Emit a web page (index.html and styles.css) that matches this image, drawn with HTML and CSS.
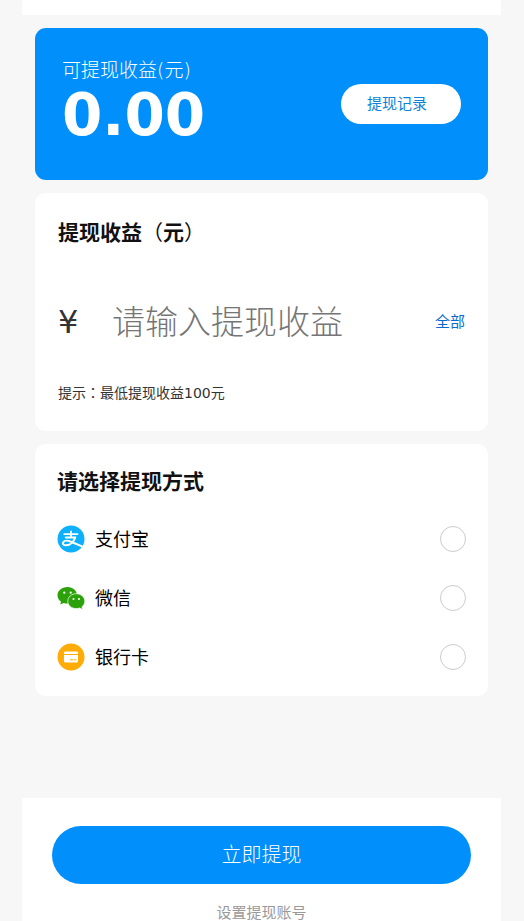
FILE: index.html
```html
<!DOCTYPE html>
<html lang="zh-CN">
<head>
<meta charset="utf-8">
<meta name="viewport" content="width=device-width, initial-scale=1">
<title>提现</title>
<link rel="stylesheet" href="styles.css">
</head>
<body>
<div class="app">
  <header class="topbar"></header>
  <main class="content">
    <section class="card balance">
      <div>
        <p class="balance-label">可提现收益(元)</p>
        <p class="balance-value">0.00</p>
      </div>
      <button class="history" type="button">提现记录</button>
    </section>

    <section class="card amount">
      <h2 class="title"><label for="amount">提现收益<span class="paren">（</span>元<span class="paren">）</span></label></h2>
      <div class="amount-row">
        <span class="currency">¥</span>
        <input class="amount-input" id="amount" type="text" inputmode="decimal" placeholder="请输入提现收益">
        <button class="all" type="button">全部</button>
      </div>
      <p class="hint">提示<span class="colon" lang="zh-TW">：</span>最低提现收益100元</p>
    </section>

    <section class="card methods">
      <h2 class="title">请选择提现方式</h2>
      <label class="method">
        <svg class="icon" viewBox="0 0 28 28" aria-hidden="true">
          <circle cx="14" cy="14" r="13.5" fill="#0eb0fb"/>
          <g fill="none" stroke="#fff" stroke-width="1.8" stroke-linecap="round">
            <path d="M7.3 9.2H20.5M14 6.3V12.3M8.7 12.5H18.3"/>
            <path d="M18.2 12.6C16.7 16.8 13.2 20.3 9.2 20.3C6.3 20.3 5.3 18.6 6.3 17.1C7.6 15.2 11 15.5 14 16.7L25 21.3" stroke-width="2"/>
          </g>
        </svg>
        <span class="method-name">支付宝</span>
        <input class="radio" type="radio" name="method">
      </label>
      <label class="method">
        <svg class="icon" viewBox="0 0 28 28" aria-hidden="true">
          <path fill="#2ba20a" d="M10.5 3C4.700 3 .5 6.700 .5 11.300C.5 14 1.900 16.200 4.100 17.700L3.200 20.600L6.700 18.900C8 19.300 9.300 19.500 10.700 19.500C16.200 19.300 20 15.700 20 11.300C20 6.700 16 3 10.500 3Z"/>
          <path fill="#2ba20a" stroke="#fff" stroke-width=".7" d="M19.300 9.700C14.500 9.700 10.800 13 10.800 17.200C10.800 21.500 14.500 24.600 19.300 24.600C20.500 24.600 21.600 24.400 22.600 24L25.600 25.600L24.900 22.900C26.700 21.500 27.800 19.500 27.800 17.200C27.800 13 24.100 9.700 19.300 9.700Z"/>
          <g fill="#fff"><circle cx="7.300" cy="8.700" r="1.100"/><circle cx="13.700" cy="8.700" r="1.100"/><circle cx="16.500" cy="15" r="1"/><circle cx="22" cy="15" r="1"/></g>
        </svg>
        <span class="method-name">微信</span>
        <input class="radio" type="radio" name="method">
      </label>
      <label class="method">
        <svg class="icon" viewBox="0 0 28 28" aria-hidden="true">
          <circle cx="14" cy="14" r="13.500" fill="#ffab08"/>
          <path fill="#fff" d="M8.200 8.500H19.800Q21 8.500 21 9.700V11H7V9.700Q7 8.500 8.200 8.500ZM7 12H21V18.300Q21 19.500 19.800 19.500H8.200Q7 19.500 7 18.300Z"/>
          <path stroke="#ffab08" stroke-width="1" d="M13 16.800H16M17 16.800H19.300"/>
        </svg>
        <span class="method-name">银行卡</span>
        <input class="radio" type="radio" name="method">
      </label>
    </section>
  </main>
  <footer class="footer">
    <button class="submit" type="button">立即提现</button>
    <a class="account" href="#">设置提现账号</a>
  </footer>
</div>
</body>
</html>
```
FILE: styles.css
```css
* {
  box-sizing: border-box;
}

body {
  margin: 0;
  background: #f7f7f7;
  color: #111;
  font-family: "DejaVu Sans", "Noto Sans CJK SC", sans-serif;
  font-size: 15px;
}

h2,
p {
  margin: 0;
}

button,
input {
  margin: 0;
  padding: 0;
  border: 0;
  background: none;
  font: inherit;
}

.app {
  display: flex;
  flex-direction: column;
  min-height: 100vh;
  margin: 0 23px 0 22px;
}

.topbar {
  height: 15px;
  background: #fff;
}

.content {
  display: flex;
  flex: 1;
  flex-direction: column;
  gap: 13px;
  padding: 13px 13px 102px;
}

.card {
  border-radius: 11px;
  background: #fff;
}

.balance {
  display: flex;
  align-items: center;
  justify-content: space-between;
  padding: 28px 27px;
  background: #008ffb;
  color: #fff;
}

.balance-label {
  font-size: 19px;
  font-weight: 300;
  line-height: 28px;
}

.balance-value {
  margin-bottom: 6px;
  font-size: 58px;
  font-weight: 700;
  line-height: 62px;
}

.history {
  padding: 0 34px 0 26px;
  border-radius: 20px;
  background: #fff;
  color: #0c83d6;
  line-height: 40px;
}

.amount {
  padding: 24px 23px 28px;
}

.title {
  font-size: 21px;
  font-weight: 700;
  line-height: 32px;
}

.paren {
  font-weight: 400;
}

.amount-row {
  display: flex;
  align-items: center;
  margin: 48px 0 36px;
}

.currency {
  width: 54px;
  color: #333;
  font-size: 32px;
  line-height: 50px;
}

.amount-input {
  flex: 1;
  min-width: 0;
  height: 50px;
  font-size: 33px;
  font-weight: 300;
  outline: 0;
}

.amount-input::placeholder {
  color: #757575;
}

.all {
  color: #0a6ad0;
  line-height: 24px;
}

.hint {
  color: #333;
  font-size: 14px;
  line-height: 20px;
}

.colon {
  font-family: "Noto Sans CJK TC", sans-serif;
  line-height: 1;
}

.methods {
  padding: 22px 22px 10px;
}

.method {
  display: flex;
  align-items: center;
  gap: 10px;
  height: 59px;
}

.methods .title {
  margin-bottom: 11px;
}

.icon {
  width: 28px;
  height: 28px;
}

.method-name {
  flex: 1;
  padding-bottom: 2px;
  color: #000;
  font-size: 18px;
}

.radio {
  width: 26px;
  height: 26px;
  border: 1px solid #ccc;
  border-radius: 50%;
  appearance: none;
}

.radio:checked {
  border: 8px solid #008ffb;
}

.footer {
  display: flex;
  flex-direction: column;
  align-items: center;
  gap: 21px;
  padding: 28px 30px 0;
  background: #fff;
}

.submit {
  width: 100%;
  border-radius: 29px;
  background: #008ffb;
  color: #fff;
  font-size: 20px;
  font-weight: 300;
  line-height: 58px;
}

.account {
  color: #999;
  line-height: 16px;
  text-decoration: none;
}
```
